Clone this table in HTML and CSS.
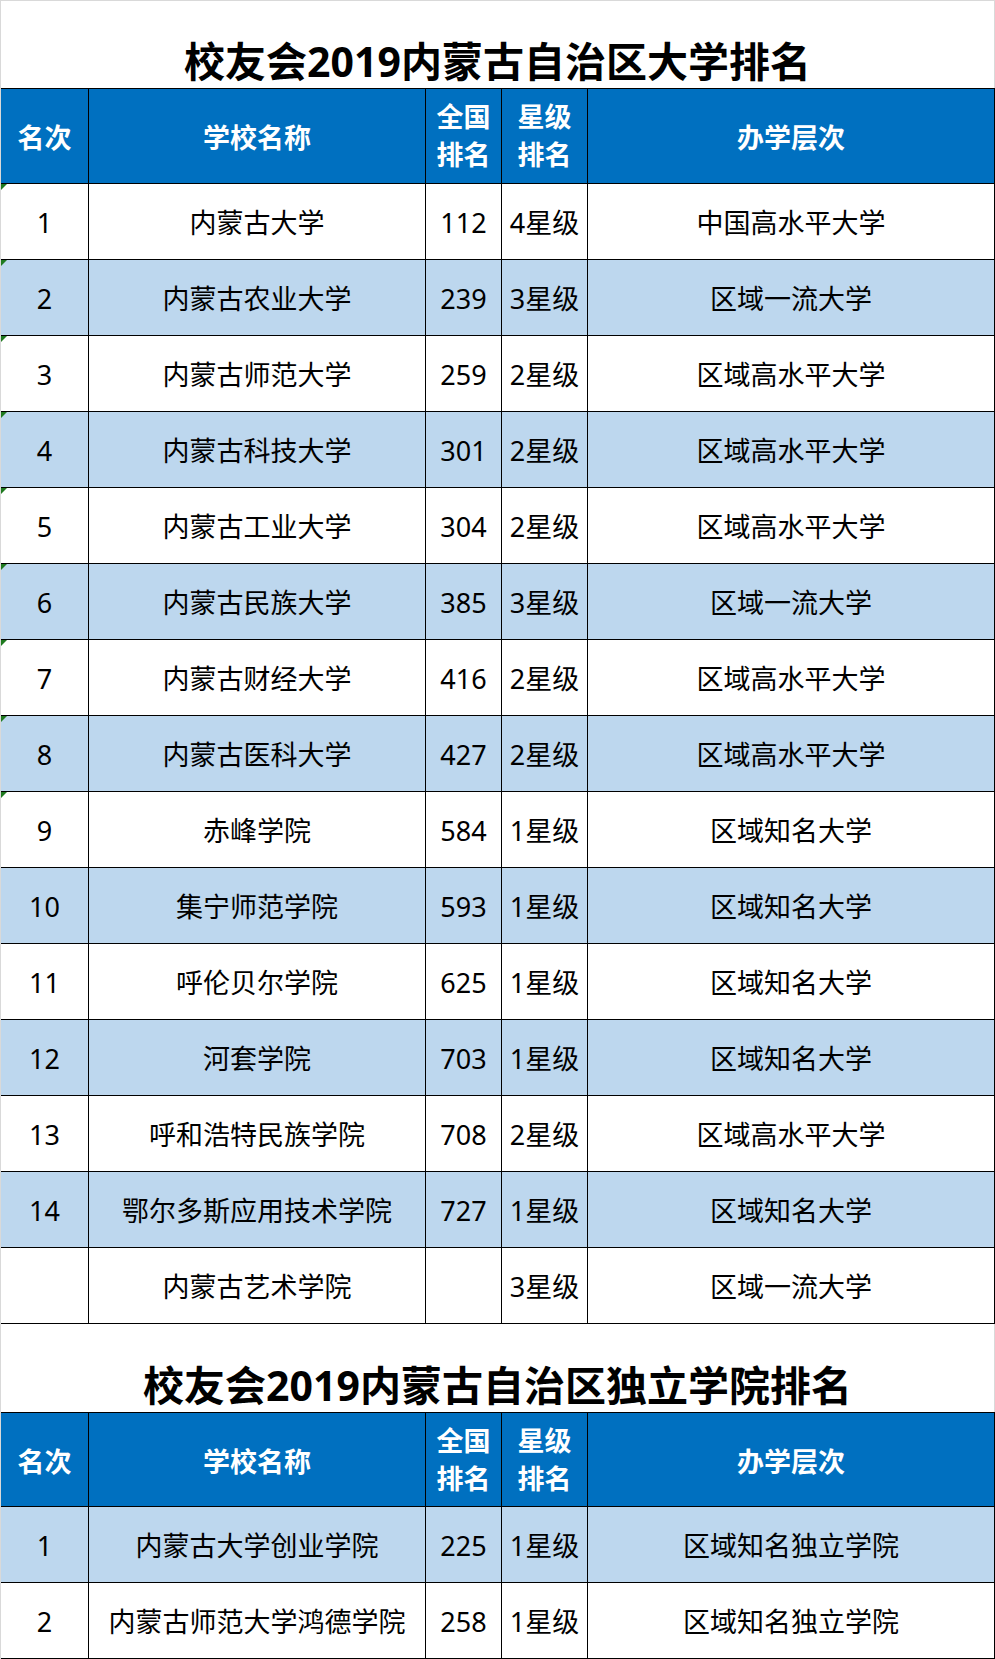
FILE: index.html
```html
<!DOCTYPE html>
<html lang="zh-CN">
<head>
<meta charset="utf-8">
<title>校友会2019内蒙古自治区大学排名</title>
<link rel="stylesheet" href="styles.css">
</head>
<body>
<div class="page">
  <div class="title">校友会2019内蒙古自治区大学排名</div>
  <div class="table">
    <div class="row head">
      <div class="cell">名次</div>
      <div class="cell">学校名称</div>
      <div class="cell two">全国<br>排名</div>
      <div class="cell two">星级<br>排名</div>
      <div class="cell">办学层次</div>
    </div>
    <div class="row"><div class="cell flag">1</div><div class="cell">内蒙古大学</div><div class="cell">112</div><div class="cell">4星级</div><div class="cell">中国高水平大学</div></div>
    <div class="row blue"><div class="cell flag">2</div><div class="cell">内蒙古农业大学</div><div class="cell">239</div><div class="cell">3星级</div><div class="cell">区域一流大学</div></div>
    <div class="row"><div class="cell flag">3</div><div class="cell">内蒙古师范大学</div><div class="cell">259</div><div class="cell">2星级</div><div class="cell">区域高水平大学</div></div>
    <div class="row blue"><div class="cell flag">4</div><div class="cell">内蒙古科技大学</div><div class="cell">301</div><div class="cell">2星级</div><div class="cell">区域高水平大学</div></div>
    <div class="row"><div class="cell flag">5</div><div class="cell">内蒙古工业大学</div><div class="cell">304</div><div class="cell">2星级</div><div class="cell">区域高水平大学</div></div>
    <div class="row blue"><div class="cell flag">6</div><div class="cell">内蒙古民族大学</div><div class="cell">385</div><div class="cell">3星级</div><div class="cell">区域一流大学</div></div>
    <div class="row"><div class="cell flag">7</div><div class="cell">内蒙古财经大学</div><div class="cell">416</div><div class="cell">2星级</div><div class="cell">区域高水平大学</div></div>
    <div class="row blue"><div class="cell flag">8</div><div class="cell">内蒙古医科大学</div><div class="cell">427</div><div class="cell">2星级</div><div class="cell">区域高水平大学</div></div>
    <div class="row"><div class="cell flag">9</div><div class="cell">赤峰学院</div><div class="cell">584</div><div class="cell">1星级</div><div class="cell">区域知名大学</div></div>
    <div class="row blue"><div class="cell">10</div><div class="cell">集宁师范学院</div><div class="cell">593</div><div class="cell">1星级</div><div class="cell">区域知名大学</div></div>
    <div class="row"><div class="cell">11</div><div class="cell">呼伦贝尔学院</div><div class="cell">625</div><div class="cell">1星级</div><div class="cell">区域知名大学</div></div>
    <div class="row blue"><div class="cell">12</div><div class="cell">河套学院</div><div class="cell">703</div><div class="cell">1星级</div><div class="cell">区域知名大学</div></div>
    <div class="row"><div class="cell">13</div><div class="cell">呼和浩特民族学院</div><div class="cell">708</div><div class="cell">2星级</div><div class="cell">区域高水平大学</div></div>
    <div class="row blue"><div class="cell">14</div><div class="cell">鄂尔多斯应用技术学院</div><div class="cell">727</div><div class="cell">1星级</div><div class="cell">区域知名大学</div></div>
    <div class="row"><div class="cell"></div><div class="cell">内蒙古艺术学院</div><div class="cell"></div><div class="cell">3星级</div><div class="cell">区域一流大学</div></div>
  </div>

  <div class="title title2">校友会2019内蒙古自治区独立学院排名</div>
  <div class="table">
    <div class="row head head2">
      <div class="cell">名次</div>
      <div class="cell">学校名称</div>
      <div class="cell two">全国<br>排名</div>
      <div class="cell two">星级<br>排名</div>
      <div class="cell">办学层次</div>
    </div>
    <div class="row blue"><div class="cell">1</div><div class="cell">内蒙古大学创业学院</div><div class="cell">225</div><div class="cell">1星级</div><div class="cell">区域知名独立学院</div></div>
    <div class="row"><div class="cell">2</div><div class="cell">内蒙古师范大学鸿德学院</div><div class="cell">258</div><div class="cell">1星级</div><div class="cell">区域知名独立学院</div></div>
  </div>
</div>
</body>
</html>
```

FILE: styles.css
```css
html, body {
  margin: 0;
  padding: 0;
  background: #ffffff;
}

.page {
  width: 995px;
  box-sizing: border-box;
  border-left: 1px solid #d9d9d9;
  border-top: 1px solid #d9d9d9;
  font-family: "Noto Sans", "Noto Sans CJK SC", sans-serif;
  color: #000000;
}

.title {
  height: 87px;
  box-sizing: border-box;
  padding-top: 34px;
  border-right: 1px solid #d9d9d9;
  display: flex;
  align-items: center;
  justify-content: center;
  font-size: 41px;
  font-weight: 700;
  line-height: 41px;
  white-space: nowrap;
}

.title2 {
  height: 88px;
}

.table {
  border-top: 1px solid #000000;
}

.row {
  display: grid;
  grid-template-columns: 88px 337px 76px 86px 407px;
  height: 76px;
  box-sizing: border-box;
  border-bottom: 1px solid #000000;
  background: #ffffff;
}

.row.blue {
  background: #bdd7ee;
}

.row.head {
  height: 95px;
  background: #0070c0;
  color: #ffffff;
  font-weight: 700;
}

.row.head2 {
  height: 94px;
}

.cell {
  position: relative;
  box-sizing: border-box;
  border-right: 1px solid #000000;
  display: flex;
  align-items: center;
  justify-content: center;
  text-align: center;
  font-size: 27px;
  line-height: 27px;
  white-space: nowrap;
  padding-top: 2px;
}

.head .cell {
  padding-top: 3px;
}

.head .cell.two {
  line-height: 38px;
  padding-top: 0;
}

.flag::before {
  content: "";
  position: absolute;
  left: 0;
  top: 0;
  width: 0;
  height: 0;
  border-style: solid;
  border-width: 6px 6px 0 0;
  border-color: #1f7a1f transparent transparent transparent;
}
```
